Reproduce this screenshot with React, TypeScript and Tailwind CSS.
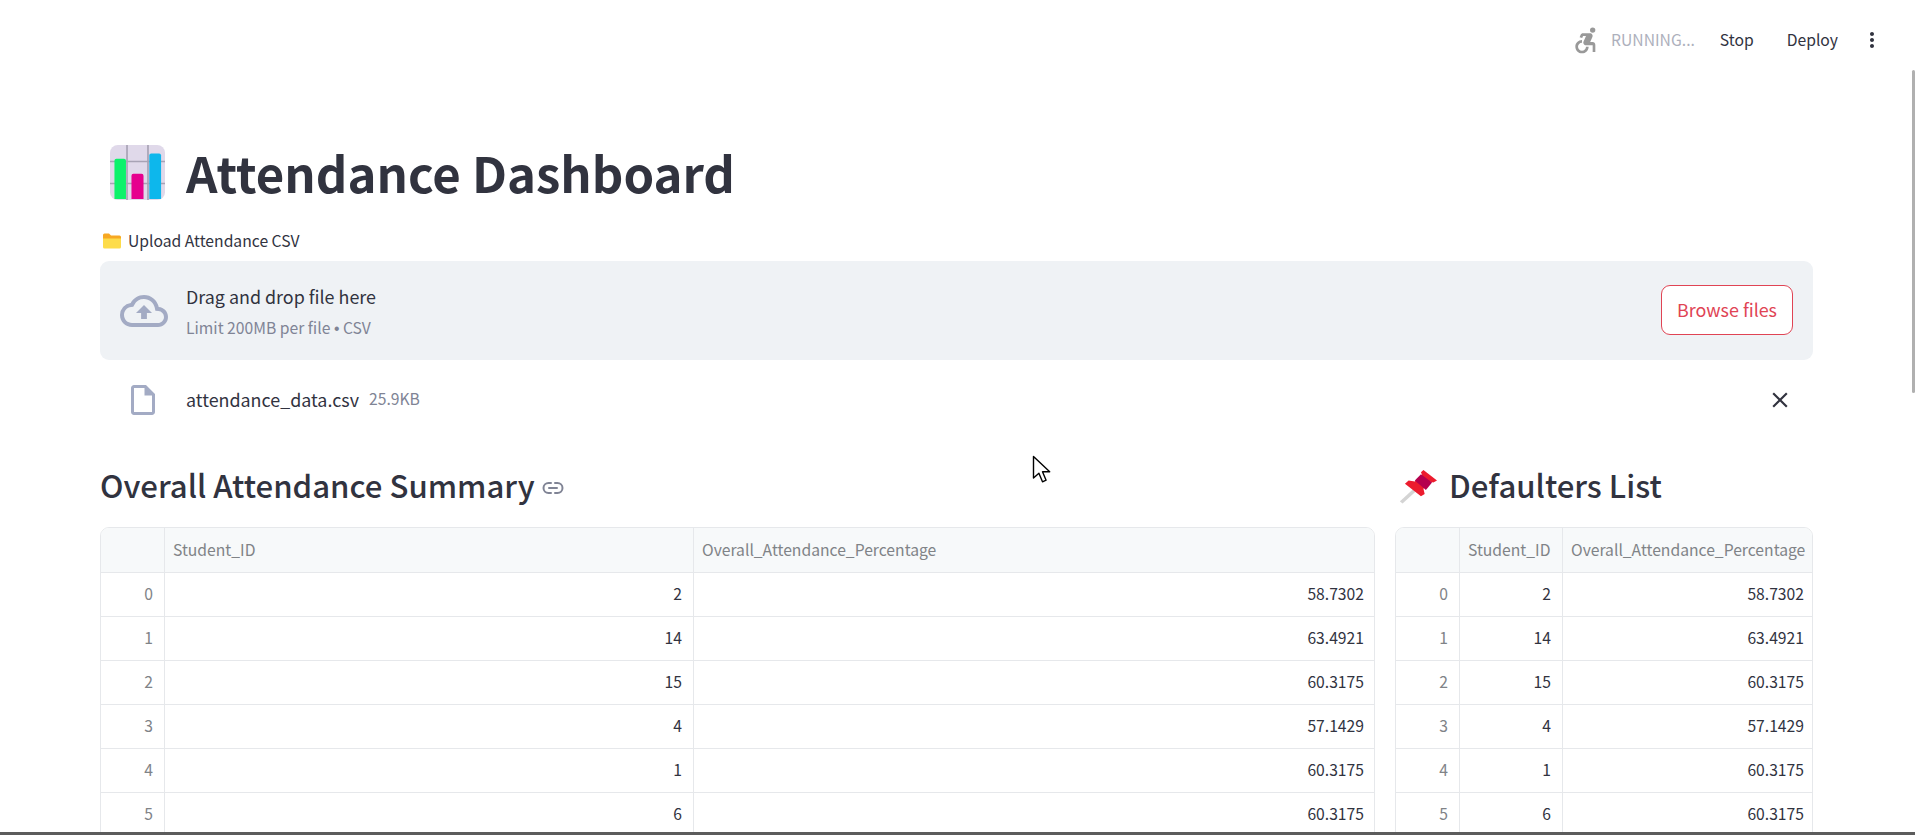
import React from "react";
import { MdAccessibleForward, MdOutlineCloudUpload, MdOutlineInsertDriveFile, MdClose, MdMoreVert } from "react-icons/md";

const rows = [
  ["0", "2", "58.7302"],
  ["1", "14", "63.4921"],
  ["2", "15", "60.3175"],
  ["3", "4", "57.1429"],
  ["4", "1", "60.3175"],
  ["5", "6", "60.3175"],
];

function Table({ cols, lastPad, className }: { cols: string; lastPad: string; className: string }) {
  return (
    <div className={`${className} border border-[#e6e8eb] rounded-t-[9px] overflow-hidden text-[15.7px] leading-[22px]`}>
      <div className={`grid ${cols} h-[44px] bg-[#f7f9fa] text-[#808387]`}>
        <div className="border-r border-[#e6e8eb]" />
        <div className="border-r border-[#e6e8eb] flex items-center pl-[8px] pb-[1px] whitespace-nowrap">Student_ID</div>
        <div className="flex items-center pl-[8px] pb-[1px] whitespace-nowrap">Overall_Attendance_Percentage</div>
      </div>
      {rows.map((r) => (
        <div key={r[0]} className={`grid ${cols} h-[44px] border-t border-[#e6e8eb] text-[#31333f]`}>
          <div className="border-r border-[#e6e8eb] flex items-center justify-end pr-[11px] pb-[2px] text-[#808387]">{r[0]}</div>
          <div className="border-r border-[#e6e8eb] flex items-center justify-end pr-[11px] pb-[2px]">{r[1]}</div>
          <div className={`flex items-center justify-end ${lastPad} pb-[2px]`}>{r[2]}</div>
        </div>
      ))}
    </div>
  );
}

function ChartEmoji() {
  return (
    <svg viewBox="0 0 42 42" className="w-[55px] h-[55px] shrink-0">
      <rect x="0" y="0" width="42" height="42" rx="6" fill="#e0d9ea" />
      <path d="M13 0V42M29 0V42M0 12.6H42M0 29.4H42" stroke="#a8a3b5" strokeWidth="1.3" />
      <path d="M3.4 12a1.5 1.5 0 0 1 1.5-1.5h5.8a1.5 1.5 0 0 1 1.5 1.5v29.2H3.4z" fill="#0cf26b" />
      <path d="M16.4 23.5a1.5 1.5 0 0 1 1.5-1.5h6.2a1.5 1.5 0 0 1 1.5 1.5v17.7h-9.2z" fill="#e6008e" />
      <path d="M30 8a1.5 1.5 0 0 1 1.5-1.5h6a1.5 1.5 0 0 1 1.5 1.5v33.2h-9z" fill="#0db7ec" />
    </svg>
  );
}

function FolderEmoji() {
  return (
    <svg viewBox="0 0 18 16" className="w-[18px] h-[16px] mr-[7px] shrink-0">
      <path d="M0 2a1.5 1.5 0 0 1 1.5-1.5h4.5l2 2h8.5a1.5 1.5 0 0 1 1.5 1.5V7H0z" fill="#f7a823" />
      <path d="M0 5.5h18v8.5a1.5 1.5 0 0 1-1.5 1.5h-15A1.5 1.5 0 0 1 0 14z" fill="#fddc4a" />
    </svg>
  );
}

function PinEmoji() {
  return (
    <svg viewBox="0 1 30 34.5" className="w-[37px] h-[36px] shrink-0" preserveAspectRatio="none">
      <path d="M1 34L13 21" stroke="#d4d4d4" strokeWidth="3" />
      <path d="M19 3l11 10-3 2-3-1-5 7 1 5-3 2L4 16l3-3 5 1 6-6-1-3z" fill="#ec1c2e" />
      <path d="M17 7l9 8-5 7-9-9z" fill="#b5004e" />
    </svg>
  );
}

function LinkGlyph() {
  return (
    <svg viewBox="0 0 24 24" className="w-[24px] h-[24px] ml-[6px] mt-[3px]" fill="none" stroke="#808495" strokeWidth="2" strokeLinecap="round">
      <path d="M10 7H7.5a5 5 0 0 0 0 10H10M14 7h2.5a5 5 0 0 1 0 10H14M8 12h8" />
    </svg>
  );
}

function Cursor() {
  return (
    <svg viewBox="0 0 22 30" className="absolute left-[1032px] top-[455px] w-[22px] h-[30px]">
      <path d="M1.5 1.5V23l5.4-4.8 3.6 8.6 3.6-1.6-3.6-8.4h7.2z" fill="#fff" stroke="#000" strokeWidth="1.4" strokeLinejoin="round" />
    </svg>
  );
}

export default function App() {
  return (
    <div className="relative h-[835px] w-[1915px] overflow-hidden bg-white flex flex-col text-[#31333f] font-['Noto_Sans_CJK_SC','Noto_Sans',sans-serif]">
      <header className="h-[80px] shrink-0 flex items-start justify-end pt-[22px] pr-[31px] text-[15.7px]">
        <div className="flex items-center h-[36px]">
          <MdAccessibleForward className="w-[32px] h-[32px] text-[#999999] mr-[9px]" />
          <span className="text-[#adb0bc] mr-[25px]">RUNNING...</span>
          <span className="mr-[33px]">Stop</span>
          <span className="mr-[22px]">Deploy</span>
          <MdMoreVert className="w-[24px] h-[24px] text-[#31333f]" />
        </div>
      </header>

      <main className="flex-1 min-h-0 pl-[100px] pr-[102px] overflow-hidden">
        <div className="flex items-center h-[72px] mt-[56px] ml-[10px]">
          <ChartEmoji />
          <h1 className="text-[49.1px] leading-[72px] font-bold ml-[21px] whitespace-nowrap">Attendance Dashboard</h1>
        </div>

        <div className="flex items-center h-[22px] mt-[22px] text-[15.7px] leading-[22px] ml-[3px]">
          <FolderEmoji />
          <span>Upload Attendance CSV</span>
        </div>

        <section className="mt-[9px] h-[99px] bg-[#eff2f5] rounded-[9px] flex items-center pl-[20px] pr-[20px]">
          <MdOutlineCloudUpload className="w-[48px] h-[48px] text-[#a3abc4]" />
          <div className="ml-[18px] flex-1 pt-[2px]">
            <div className="text-[17.9px] leading-[26px]">Drag and drop file here</div>
            <div className="text-[15.7px] leading-[22px] mt-[8px] text-[#808495]">Limit 200MB per file <span className="font-['Liberation_Sans']">•</span> CSV</div>
          </div>
          <button className="w-[132px] h-[50px] mb-[2px] bg-white border border-[#e04454] rounded-[9px] text-[#e04454] text-[17.9px]">Browse files</button>
        </section>

        <section className="mt-[16px] h-[48px] flex items-center pl-[25px]">
          <MdOutlineInsertDriveFile className="w-[36px] h-[36px] text-[#a3abc4]" />
          <span className="ml-[25px] mb-[2px] text-[17.9px]">attendance_data.csv</span>
          <span className="ml-[10px] mb-[2px] text-[15.7px] text-[#808495]">25.9KB</span>
          <MdClose className="ml-auto mr-[20px] w-[26px] h-[26px] text-[#31333f]" />
        </section>

        <div className="flex mt-[40px] gap-[20px]">
          <div className="w-[1275px] shrink-0">
            <div className="flex items-center h-[44px]">
              <h3 className="text-[31.15px] leading-[44px] pb-[2px] font-medium whitespace-nowrap">Overall Attendance Summary</h3>
              <LinkGlyph />
            </div>
            <Table cols="grid-cols-[64px_529px_1fr]" lastPad="pr-[10px]" className="mt-[19px]" />
          </div>
          <div className="flex-1">
            <div className="flex items-center h-[44px] pl-[5px]">
              <PinEmoji />
              <h3 className="text-[31.15px] leading-[44px] pb-[2px] font-medium ml-[12px] whitespace-nowrap">Defaulters List</h3>
            </div>
            <Table cols="grid-cols-[64px_103px_1fr]" lastPad="pr-[8px]" className="mt-[19px]" />
          </div>
        </div>
      </main>

      <div className="h-[3px] shrink-0 bg-[#5c5c5c]" />
      <div className="absolute right-0 top-[70px] w-[3px] h-[323px] rounded-[2px] bg-[#b0b0b0]" />
      <Cursor />
    </div>
  );
}
